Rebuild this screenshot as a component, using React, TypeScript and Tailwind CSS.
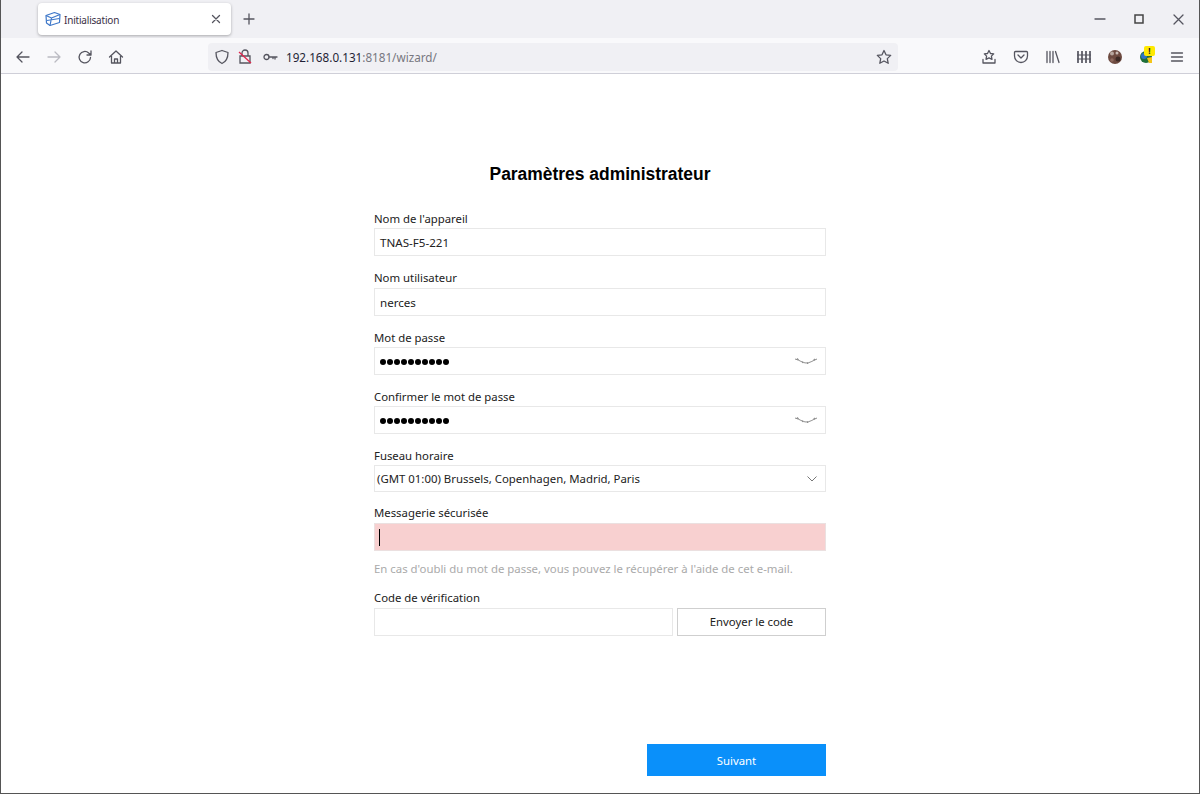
import React from "react";

const font = "font-['Noto_Sans','Open_Sans',sans-serif]";

function Label({ children, cls }: { children: React.ReactNode; cls: string }) {
  return <div className={`h-[17px] text-[11.35px] leading-[15px] text-[#222] ${cls}`}>{children}</div>;
}

function Box({ children, cls = "" }: { children?: React.ReactNode; cls?: string }) {
  return (
    <div className={`flex items-center h-[28px] border border-[#e8e8e8] bg-white pl-[5px] pr-[8px] pt-[2px] text-[11.6px] text-[#222] ${cls}`}>
      {children}
    </div>
  );
}

function ClosedEye() {
  return (
    <svg width="24" height="10" viewBox="0 0 24 10" className="ml-auto -mr-[1px]" fill="none" stroke="#8f8f8f" strokeWidth="1">
      <path d="M1 2 C6 3 8 6 12 6 C16 6 18 4 23 2" />
      <path d="M3 1.500l1.500 1.500M8.500 4.500l.4 1.500M13.500 5.500l.2 1.500M19.500 3.500l1.500 -1.500" strokeWidth="1.300" />
    </svg>
  );
}

function Dots() {
  return (
    <div className="flex gap-[1px]">
      {Array.from({ length: 10 }).map((_, i) => (
        <span key={i} className="w-[6px] h-[6px] rounded-full bg-black" />
      ))}
    </div>
  );
}

const stroke = { fill: "none", stroke: "#55555f", strokeWidth: 1.3, strokeLinecap: "round" as const, strokeLinejoin: "round" as const };

function Icon({ children, cls = "", w = 16, h = 16 }: { children: React.ReactNode; cls?: string; w?: number; h?: number }) {
  return (
    <svg width={w} height={h} viewBox={`0 0 ${w} ${h}`} className={`shrink-0 ${cls}`} {...stroke}>
      {children}
    </svg>
  );
}

function TabBar() {
  return (
    <div className="h-[38px] bg-[#f0f0f4] flex items-start pl-[36px] shrink-0">
      <div className="mt-[3px] ml-[1px] w-[193px] h-[32px] bg-white rounded-[4px] shadow-[0_1px_3px_rgba(0,0,0,0.3)] flex items-center pl-[7px] pr-[10px]">
        <svg width="16" height="16" viewBox="0 0 16 16" fill="none" stroke="#3f78c9" strokeWidth="1.2" strokeLinejoin="round">
          <path d="M1 4.500 L9.500 1.500 L15 3.500 L14.500 11.500 L5 14.500 L1.500 12 Z" />
          <path d="M1 4.500 L6.500 7 L15 3.500 M6.500 7 L5 14.500 M2 9.500 L14.500 7.500" />
        </svg>
        <span className="ml-[3px] pt-[2px] text-[10px] tracking-[-0.2px] text-[#3a2f45]">Initialisation</span>
        <Icon cls="ml-auto" w={10} h={10}>
          <path d="M1.500 1.500l7 7M8.500 1.500l-7 7" />
        </Icon>
      </div>
      <Icon cls="ml-[12px] mt-[13px]" w={12} h={12}>
        <path d="M6 1v10M1 6h10" />
      </Icon>
      <div className="ml-auto flex items-center h-[38px] pr-[15px]">
        <Icon w={12} h={12}><path d="M1 6h10" /></Icon>
        <svg width="10" height="10" viewBox="0 0 10 10" className="ml-[28px]" fill="none" stroke="#444" strokeWidth="1.5"><rect x="1" y="1" width="8" height="8" /></svg>
        <Icon cls="ml-[29px]" w={11} h={11}><path d="M1 1l9 9M10 1l-9 9" /></Icon>
      </div>
    </div>
  );
}

function NavBar() {
  return (
    <div className="h-[36px] pt-[2px] bg-[#f9f9fb] border-b border-[#cfcfd8] flex items-center pl-[14px] shrink-0">
      <Icon><path d="M14 8H2M7 3L2 8l5 5" /></Icon>
      <svg width="16" height="16" viewBox="0 0 16 16" className="ml-[15px]" fill="none" stroke="#bbbbc2" strokeWidth="1.3" strokeLinecap="round" strokeLinejoin="round"><path d="M2 8h12M9 3l5 5-5 5" /></svg>
      <Icon cls="ml-[15px]"><path d="M13.500 8.500a5.700 5.700 0 1 1-1.800-4.500L14 6M14 2v4h-4" /></Icon>
      <Icon cls="ml-[15px]"><path d="M1.500 8 L8 2l6.500 6M3.500 7v7h9V7M6.500 14v-4h3v4" /></Icon>
      <div className="ml-[84px] w-[690px] h-[28px] rounded-[4px] bg-[#f0f0f4] flex items-center pl-[6px] pr-[6px]">
        <Icon><path d="M8 1.500l6 2c0 5-1.500 9-6 11-4.500-2-6-6-6-11z" /></Icon>
        <svg width="14" height="16" viewBox="0 0 14 16" className="ml-[8px]" fill="none">
          <path d="M4 7V4a3 3 0 0 1 6 0v3M2 7h10v7H2z" stroke="#55555f" strokeWidth="1.3" />
          <path d="M1 3l12 11" stroke="#e2264d" strokeWidth="1.3" />
        </svg>
        <Icon cls="ml-[11px]" w={15} h={10}><circle cx="3.500" cy="5" r="2.500" /><path d="M6 5h8M12 5v2M10 5v1.500" /></Icon>
        <span className="ml-[8px] pt-[2px] text-[11.7px] whitespace-nowrap text-[#1f1f35]">
          192.168.0.131<span className="text-[#77777f]">:8181/wizard/</span>
        </span>
        <Icon cls="ml-auto"><path d="M8 1.500l2 4.300 4.700 .6-3.400 3.200 .9 4.700L8 12l-4.200 2.300 .9-4.700L1.300 6.400 6 5.800z" /></Icon>
      </div>
      <div className="ml-[83px] flex items-center">
        <Icon><path d="M8 1.500l1.500 3 3.200 .4-2.300 2.200 .6 3.200L8 8.800l-3 1.500 .6-3.200-2.300-2.200 3.200-.4zM2 10.500V14h12v-3.500" /></Icon>
        <Icon cls="ml-[16px]"><path d="M2.500 2.500h11a1 1 0 0 1 1 1V7a6.500 6.500 0 0 1-13 0V3.500a1 1 0 0 1 1-1zM5 6l3 3 3-3" /></Icon>
        <Icon cls="ml-[16px]"><path d="M2 2.500v11M5 2.500v11M8 2.500v11M10.500 2.500l3.500 11" /></Icon>
        <svg width="16" height="16" viewBox="0 0 16 16" className="ml-[15px]" fill="none" stroke="#55555f" strokeWidth="1.700"><path d="M2 2v12M6 2v12M10 2v12M14 2v12" /><path d="M1 6h14M1 10h14" strokeWidth="1.200" /></svg>
        <svg width="16" height="16" viewBox="0 0 16 16" className="ml-[15px]">
          <circle cx="8" cy="8" r="7" fill="#6d4a40" />
          <circle cx="5" cy="4.500" r="2" fill="#b8a8a0" />
          <circle cx="10" cy="4" r="1.500" fill="#c9bbb4" />
          <circle cx="11" cy="10" r="2.500" fill="#3d2a25" />
          <circle cx="5" cy="11" r="1.800" fill="#8f6a5e" />
        </svg>
        <div className="relative ml-[16px] w-[16px] h-[16px]">
          <svg width="16" height="16" viewBox="0 0 16 16"><circle cx="7" cy="8" r="6" fill="#1f6f3a" /><circle cx="5" cy="7" r="3" fill="#2f72c4" /><path d="M8 9l5-1 0 6-3 0z" fill="#f5c518" /></svg>
          <div className="absolute -top-[3px] left-[5px] w-[11px] h-[10px] rounded-[2px] bg-[#ffe900] flex items-center justify-center text-[8px] leading-none font-bold text-[#222]">!</div>
        </div>
        <Icon cls="ml-[15px]" w={14} h={14}><path d="M1.500 3h11M1.500 7h11M1.500 11h11" /></Icon>
      </div>
    </div>
  );
}

export default function App() {
  return (
    <div className={`h-[794px] w-[1200px] flex flex-col overflow-hidden bg-white border-x border-[#555] border-b ${font}`}>
      <TabBar />
      <NavBar />
      <div className="flex-1 flex flex-col items-center min-h-0">
        <h1 className="mt-[89px] h-[22px] text-[17.45px] leading-[22px] font-bold text-black font-['Liberation_Sans',sans-serif]">
          Paramètres administrateur
        </h1>
        <div className="mt-[26px] w-[452px] flex flex-col">
          <Label cls="">Nom de l'appareil</Label>
          <Box cls="">TNAS-F5-221</Box>
          <Label cls="mt-[14px]">Nom utilisateur</Label>
          <Box cls="mt-[1px]">nerces</Box>
          <Label cls="mt-[14px]">Mot de passe</Label>
          <Box cls=""><Dots /><ClosedEye /></Box>
          <Label cls="mt-[14px]">Confirmer le mot de passe</Label>
          <Box cls=""><Dots /><ClosedEye /></Box>
          <Label cls="mt-[14px]">Fuseau horaire</Label>
          <div className="h-[27px] flex items-center border border-[#e8e8e8] pl-[2px] pr-[7px] text-[11.4px] text-[#222]">
            (GMT 01:00) Brussels, Copenhagen, Madrid, Paris
            <svg width="10" height="6" viewBox="0 0 10 6" className="ml-auto mr-[1px]" fill="none" stroke="#777" strokeWidth="1"><path d="M.5 .5l4.500 4.500 4.500-4.500" /></svg>
          </div>
          <Label cls="mt-[13px]">Messagerie sécurisée</Label>
          <div className="h-[28px] mt-[1px] bg-[#f8d0d0] border border-[#ebe0e0] flex items-center pl-[4px]">
            <div className="w-[1px] h-[17px] bg-black" />
          </div>
          <div className="mt-[9px] h-[17px] text-[11.4px] leading-[17px] text-[#aaa]">
            En cas d'oubli du mot de passe, vous pouvez le récupérer à l'aide de cet e-mail.
          </div>
          <Label cls="mt-[13px]">Code de vérification</Label>
          <div className="mt-[1px] flex gap-[4px] h-[28px]">
            <div className="w-[299px] border border-[#e8e8e8]" />
            <button className="flex-1 border border-[#cfcfcf] text-[11.35px] text-[#222] bg-white">Envoyer le code</button>
          </div>
          <button className="mt-[108px] ml-auto w-[179px] h-[32px] pt-[2px] bg-[#0a90fa] text-white text-[11.35px]">Suivant</button>
        </div>
      </div>
    </div>
  );
}
